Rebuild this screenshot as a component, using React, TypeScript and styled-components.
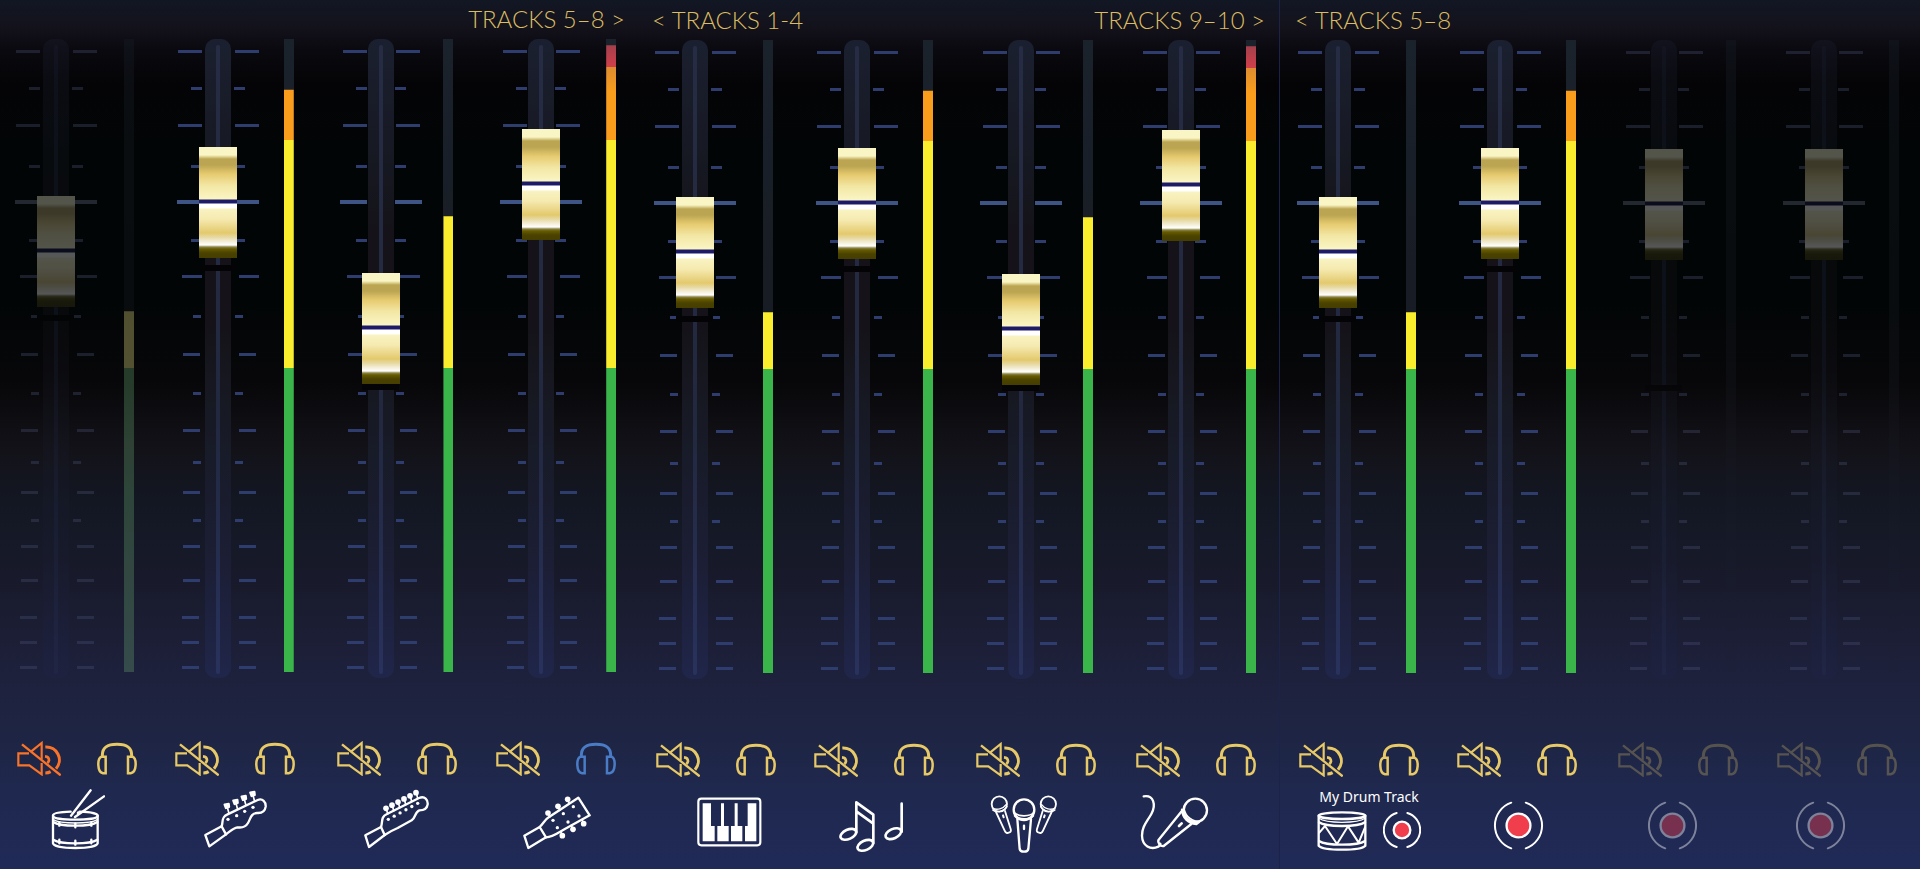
import React, { useState } from "react";
import styled, { createGlobalStyle, css } from "styled-components";

const GOLD = "#e8c967";
const ORANGE = "#fa7328";
const BLUE = "#4a7cc6";

const GlobalStyle = createGlobalStyle`
  *, *::before, *::after { box-sizing: border-box; }
  body {
    margin: 0;
    background: #202a56;
    font-family: Lato, "Liberation Sans", sans-serif;
  }
  button { border: 0; padding: 0; background: none; cursor: pointer; }
`;

const Mixer = styled.main`
  display: grid;
  grid-template-columns: 639fr 640fr 641fr;
  min-height: 100vh;
  background: linear-gradient(
    to bottom,
    #121724 0px,
    #13121b 28px,
    #0a090f 50px,
    #040406 85px,
    #020505 150px,
    #020505 300px,
    #070709 380px,
    #131219 450px,
    #131722 500px,
    #181a2b 580px,
    #1d1f38 650px,
    #1e223e 690px,
    #1e2544 740px,
    #1f284e 790px,
    #202a57 869px
  );
`;

const Bank = styled.section<{ $tone: "first" | "middle" | "last" }>`
  display: flex;
  flex-direction: column;
  min-width: 0;
  padding-top: ${(p) => (p.$tone === "first" ? 0 : 1)}px;
  ${(p) =>
    p.$tone === "last" &&
    css`
      border-left: 1px solid #1b2348;
      padding-left: 2px;
    `}
`;

const BankHeader = styled.header`
  display: flex;
  justify-content: space-between;
  height: 39px;
  padding: 5px 14px 0 13px;
`;

const BankLink = styled.a`
  color: #dcbc62;
  font-size: 24px;
  font-weight: 300;
  line-height: 28px;
  text-decoration: none;
  white-space: nowrap;
`;

const Row = styled.div<{ $columns: string }>`
  display: grid;
  grid-template-columns: ${(p) => p.$columns};
`;

const ControlRow = styled(Row)`
  margin-top: 63px;
  height: 35px;
`;

const InstrumentRow = styled(Row)<{ $lead: number }>`
  height: 67px;
  margin: 11px 0 13px;
  padding-left: ${(p) => p.$lead}px;
`;

const Strip = styled.div<{ $disabled?: boolean }>`
  display: flex;
  min-width: 0;
  padding-left: 15px;
  opacity: ${(p) => (p.$disabled ? 0.33 : 1)};
`;

const Scale = styled.div`
  position: relative;
  display: flex;
  justify-content: center;
  flex: none;
  width: 82px;
  height: 639px;
`;

const Graduations = styled.svg`
  position: absolute;
  inset: 0;
  overflow: visible;
`;

const Track = styled.div`
  position: relative;
  display: flex;
  justify-content: center;
  width: 26px;
  padding: 6px 0 4px;
  border-radius: 10px;
  background: linear-gradient(
    to bottom,
    #1b2030 0%,
    #161821 20%,
    #151319 30%,
    #151319 45%,
    #171a25 60%,
    #1c1e35 82%,
    #20264a 100%
  );
`;

const Rail = styled.div`
  width: 4px;
  border-radius: 2px;
  background: linear-gradient(to bottom, #262c44, #222840 60%, #28325c);
`;

const Shade = styled.span`
  position: absolute;
  left: 22px;
  width: 37px;
  height: 6px;
  background: #040305;
`;

const thumb = css`
  appearance: none;
  width: 38px;
  height: 111px;
  border: 0;
  border-radius: 0;
  background: linear-gradient(
    to bottom,
    #faf5c4 0px,
    #faf5c4 8px,
    #bba552 12px,
    #bba552 18px,
    #e6ca6f 27px,
    #f2e6a2 38px,
    #faf5c4 52px,
    #1d1a68 53px,
    #1d1a68 56px,
    #ffffff 57px,
    #ffffff 61px,
    #f9f3c2 62px,
    #f5eab0 72px,
    #e3c96d 86px,
    #e9dcae 91px,
    #ffffff 98px,
    #8a8244 100px,
    #665b00 102px,
    #4a4200 106px,
    #463e00 111px
  );
`;

const Fader = styled.input<{ $dim?: boolean }>`
  position: absolute;
  top: 0;
  left: 22px;
  width: 38px;
  height: 100%;
  margin: 0;
  appearance: none;
  writing-mode: vertical-lr;
  direction: rtl;
  background: transparent;
  cursor: ns-resize;
  filter: ${(p) => (p.$dim ? "saturate(0.6)" : "none")};

  &::-webkit-slider-runnable-track {
    width: 38px;
    height: 100%;
    background: transparent;
  }
  &::-webkit-slider-thumb {
    ${thumb}
  }
  &::-moz-range-thumb {
    ${thumb}
  }
`;

const Meter = styled.div<{ $gap: number }>`
  flex: none;
  width: 10px;
  height: 633px;
  margin-left: ${(p) => p.$gap}px;
  background: linear-gradient(to bottom, #1a222c, #171920 60%, #1c2136);
`;

const MeterFill = styled.div<{ $dim?: boolean }>`
  width: 100%;
  height: 100%;
  filter: ${(p) => (p.$dim ? "saturate(0.5)" : "none")};
  background: linear-gradient(
    to top,
    #3ab54a 0 304px,
    #f9ed2d 304px 532px,
    #fa9d1c 532px 580px,
    #dd8d30 605px,
    #d03f4b 605px,
    #a4404b 626px
  );
`;

const Controls = styled.div<{ $disabled?: boolean }>`
  display: flex;
  align-items: flex-start;
  gap: 36px;
  padding-left: 17px;
  opacity: ${(p) => (p.$disabled ? 0.28 : 1)};
`;

const IconButton = styled.button<{ $color: string }>`
  display: block;
  height: 35px;
  color: ${(p) => p.$color};

  svg { display: block; }
`;

const Line = styled.svg<{ $sharp?: boolean }>`
  display: block;
  fill: none;
  stroke: currentColor;
  stroke-linejoin: ${(p) => (p.$sharp ? "miter" : "round")};
  stroke-linecap: ${(p) => (p.$sharp ? "butt" : "round")};
`;

const Instrument = styled.div<{ $disabled?: boolean }>`
  display: flex;
  flex-direction: column;
  align-items: flex-start;
  color: #fff;
  opacity: ${(p) => (p.$disabled ? 0.42 : 1)};
`;

const CustomTrack = styled.div`
  display: flex;
  flex-direction: column;
  align-items: center;
`;

const TrackName = styled.span`
  font-size: 14px;
  line-height: 18px;
  font-weight: 400;
  font-family: "Noto Sans", Lato, sans-serif;
  white-space: nowrap;
`;

const TrackIcons = styled.div`
  display: flex;
  align-items: flex-start;
  gap: 16px;
  padding-top: 5px;
`;

const RecordButton = styled.button<{ $top: number }>`
  display: block;
  margin-top: ${(p) => p.$top}px;
  color: #fff;
`;

type TickKind = "long" | "short" | "unity" | "wide" | "mid" | "tiny" | "low";

/* distance from the centre of the fader: [left outer, left inner, right inner, right outer] */
const TICK_SPAN: Record<TickKind, [number, number, number, number]> = {
  long: [40, 16, 17, 41],
  short: [27, 16, 16, 27],
  unity: [41, 14, 14, 41],
  wide: [36, 16, 21, 41],
  mid: [35, 18, 21, 38],
  tiny: [25, 17, 17, 25],
  low: [36, 19, 21, 38],
};

const TICKS: [number, TickKind][] = [
  [11, "long"], [48, "short"], [85, "long"], [126, "short"], [161, "unity"],
  [200, "short"], [236, "wide"], [276, "tiny"], [314, "mid"], [353, "tiny"],
  [390, "mid"], [422, "tiny"], [452, "mid"], [480, "tiny"], [506, "mid"],
  [540, "mid"], [577, "low"], [602, "low"], [627, "low"],
];

function Ticks({ tuck, dim }: { tuck: number; dim?: boolean }) {
  return (
    <Graduations width="82" height="639" viewBox="-41 0 82 639" aria-hidden="true" fill={dim ? "#4b5478" : "#2f3c6e"}>
      {TICKS.map(([y, kind]) => {
        const [lo, li, ri, ro] = TICK_SPAN[kind];
        const t = kind === "unity" ? 0 : tuck;
        const h = kind === "unity" ? 4 : 3;
        const fill = kind !== "unity" ? undefined : dim ? "#666c84" : "#3d5484";
        return (
          <g key={y} fill={fill}>
            <rect x={-lo + t} y={y} width={lo - li} height={h} />
            <rect x={ri - t} y={y} width={ro - ri} height={h} />
          </g>
        );
      })}
    </Graduations>
  );
}

function MuteIcon() {
  return (
    <Line $sharp width="44" height="35" viewBox="51 61 132 105" strokeWidth="6.5">
      <path d="M87 98H55V134H88L125 161V127" />
      <path d="M93 93L125 67V116" />
      <path d="M66 71L182 164" strokeWidth="7" />
      <path d="M136 79A39 39 0 0 1 168 144" strokeWidth="9" />
      <path d="M136 157Q145 157 152 153" strokeWidth="9" />
      <path d="M135 107Q147 108 147 119Q146 124 142 127" strokeWidth="8" />
    </Line>
  );
}

function HeadphonesIcon() {
  return (
    <Line $sharp width="40" height="35" viewBox="291 61 120 105" strokeWidth="7.5">
      <path d="M307 108V104C307 79 322 71 351 71C380 71 395 79 395 104V108" strokeWidth="9" />
      <path d="M317 108V158H309C291 154 291 113 305 108Z" />
      <path d="M384 108V158H392C411 154 411 113 397 108Z" />
    </Line>
  );
}

function SnareIcon() {
  return (
    <Line width="54" height="67" viewBox="154 213 162 201" strokeWidth="7">
      <path d="M214 299L273 223M226 303L313 241" />
      <path d="M240 287C275 288 294 293 294 299C294 307 262 311 227 311C190 311 160 307 160 299C160 292 180 288 213 287" />
      <path d="M160 299V382C162 391 190 396 227 396C264 396 292 391 294 382V299" />
      <path d="M161 311C175 320 200 321 227 321S279 320 293 311" strokeWidth="4" />
      <path d="M161 318C175 328 200 329 227 329S279 328 293 318" />
      <path d="M161 371C175 380 200 382 227 382S279 380 293 371" />
      <path d="M179 319V329M227 322V334M275 319V329M179 371V382M227 374V386M275 371V382" />
      <circle cx="236" cy="291" r="5" fill="currentColor" stroke="none" />
    </Line>
  );
}

function BassIcon() {
  return (
    <Line width="63" height="67" viewBox="611 213 189 201" strokeWidth="7">
      <path d="M664 331L615 357L627 391L677 355" />
      <path d="M664 331L677 355" />
      <path d="M664 331C669 318 662 304 680 296L772 252C787 246 797 258 796 272C794 287 784 292 770 291C752 292 751 307 743 321C736 333 724 336 711 334C698 336 690 346 677 355" />
      {[[679, 270], [705, 258], [730, 246], [756, 234]].map(([x, y]) => (
        <g key={x}>
          <path d={`M${x - 6} ${y - 4}L${x + 6} ${y - 6}L${x + 7} ${y + 3}L${x - 2} ${y + 6}Z`} fill="currentColor" />
          <path d={`M${x + 1} ${y}L${x + 6} ${y + 19}`} strokeWidth="5" />
        </g>
      ))}
      {[[683, 310], [709, 299], [733, 286], [758, 274]].map(([x, y]) => (
        <circle key={x} cx={x} cy={y} r="5" fill="currentColor" stroke="none" />
      ))}
    </Line>
  );
}

function GuitarIcon() {
  return (
    <Line width="65" height="67" viewBox="135 213 195 201" strokeWidth="7">
      <path d="M186 333L139 358L150 393L197 357" />
      <path d="M186 333L197 357" />
      <path d="M186 333C192 318 184 303 204 294L300 246C318 239 327 251 326 265C324 279 313 283 301 283C287 288 291 304 278 313L236 336C222 342 210 348 197 357" />
      {[0, 1, 2, 3, 4, 5].map((i) => (
        <g key={i} fill="currentColor">
          <circle cx={201 + i * 18} cy={277 - i * 9.4} r="8.5" stroke="none" />
          <path d={`M${202 + i * 18} ${277 - i * 9.4}l4 17`} strokeWidth="5" />
          <circle cx={208 + i * 17.6} cy={310 - i * 9.6} r="5" stroke="none" />
        </g>
      ))}
    </Line>
  );
}

function AcousticIcon() {
  return (
    <Line width="68" height="67" viewBox="613 213 204 201" strokeWidth="7">
      <path d="M663 333L617 359L629 396L682 364Z" />
      <path d="M663 333C674 323 679 310 690 304L779 245L813 298L740 338C718 350 703 363 682 364" />
      {[[688, 291], [718, 271], [747, 250], [731, 359], [763, 340], [795, 323]].map(([x, y], i) => (
        <g key={x} fill="currentColor">
          <circle cx={x} cy={y} r="8.5" stroke="none" />
          <path d={i < 3 ? `M${x} ${y}l5 12` : `M${x} ${y}l-5 -12`} strokeWidth="5" />
        </g>
      ))}
      {[[703, 313], [734, 293], [764, 272], [716, 335], [748, 318], [781, 300]].map(([x, y]) => (
        <circle key={x} cx={x} cy={y} r="5" fill="currentColor" stroke="none" />
      ))}
    </Line>
  );
}

function PianoIcon() {
  return (
    <Line width="65" height="67" viewBox="172 211 195 201" strokeWidth="6.5">
      <rect x="176" y="243" width="186" height="140" rx="9" />
      <g fill="currentColor" stroke="none">
        <path d="M189 257H214V325H225V371H189Z" />
        <path d="M244 257H253V325H267V371H233V325H244Z" />
        <path d="M285 257H294V325H308V371H274V325H285Z" />
        <path d="M324 257H350V371H316V325H324Z" />
      </g>
    </Line>
  );
}

function NotesIcon() {
  return (
    <Line width="65" height="67" viewBox="598 211 195 201" strokeWidth="8">
      <ellipse cx="626" cy="350" rx="25" ry="14" transform="rotate(-24 626 350)" />
      <ellipse cx="677" cy="383" rx="25" ry="14" transform="rotate(-24 677 383)" />
      <ellipse cx="761" cy="348" rx="25" ry="14" transform="rotate(-24 761 348)" />
      <path d="M650 344V254L701 291V376M650 281L701 318M786 342V258" />
    </Line>
  );
}

function SmallMic({ x, flip }: { x: number; flip?: boolean }) {
  return (
    <g transform={`translate(${x} 259)${flip ? " scale(-1 1)" : ""}`} strokeWidth="5.5">
      <circle r="23" />
      <path d="M-21 12C-8 20 12 14 21 1M-20 18C-8 28 15 22 23 8" strokeWidth="4" />
      <path d="M-10 24L16 80C19 87 24 88 28 86C34 85 36 81 34 75L17 21" />
      <path d="M11 34L13 40" strokeWidth="6" />
    </g>
  );
}

function MicsIcon() {
  return (
    <Line width="68" height="67" viewBox="91 211 204 201" strokeWidth="7">
      <SmallMic x={119} />
      <SmallMic x={266} flip />
      <circle cx="193" cy="276" r="31" />
      <path d="M163 284C174 298 212 298 223 284" strokeWidth="5" />
      <path d="M166 294C178 308 208 308 220 294" />
      <path d="M173 304L180 394C181 400 184 402 193 402S205 400 206 394L214 304" />
      <path d="M193 324V334" strokeWidth="7" />
    </Line>
  );
}

function MicIcon() {
  return (
    <Line width="69" height="67" viewBox="542 211 207 201" strokeWidth="7">
      <path d="M553 236C583 231 591 261 576 289C562 314 548 326 548 354C549 385 574 398 597 387C603 384 600 380 603 378" />
      <path d="M667 281L598 366C594 373 602 387 613 385L696 319" />
      <circle cx="708" cy="278" r="35" />
      <path d="M674 266C673 290 691 309 718 312" strokeWidth="5" />
      <path d="M668 276C670 301 686 317 711 319L719 313" />
      <path d="M659 325L667 317" strokeWidth="8" />
    </Line>
  );
}

function DrumIcon() {
  return (
    <Line width="50" height="40" viewBox="111 276 150 120" strokeWidth="7">
      <ellipse cx="186" cy="290" rx="70" ry="10" />
      <path d="M116 290V380C124 389 152 392 186 392S248 389 256 380V290" />
      <path d="M117 298C130 308 158 310 186 310S242 308 255 298" strokeWidth="4" />
      <path d="M117 310C130 319 158 321 186 321S242 319 255 310M117 366C130 375 158 377 186 377S242 375 255 366" />
      <path d="M118 341L135 321L171 375L204 322L236 371L255 325" strokeWidth="6" />
    </Line>
  );
}

function RecordIcon({ small }: { small?: boolean }) {
  return small ? (
    <Line width="38" height="38" viewBox="-57 -57 114 114" strokeWidth="6">
      <circle r="25" fill="#f03e4d" strokeWidth="7" />
      <path d="M-16 -51A53 53 0 0 0 -16 51M16 -51A53 53 0 0 1 16 51" />
    </Line>
  ) : (
    <Line width="51" height="51" viewBox="-77 -77 154 154" strokeWidth="6">
      <circle r="36" fill="#f03e4d" strokeWidth="7" />
      <path d="M-22 -69A73 73 0 0 0 -22 69M22 -69A73 73 0 0 1 22 69" />
    </Line>
  );
}

interface Channel {
  name: string;
  position: number;
  level: number;
  shade?: number;
  off?: boolean;
  stripOff?: boolean;
  muted?: boolean;
  solo?: boolean;
  art: React.ReactNode;
}

interface BankData {
  tone: "first" | "middle" | "last";
  prev?: string;
  next?: string;
  faderColumns: string;
  instrumentLead: number;
  instrumentColumns: string;
  channels: Channel[];
}

const record = (
  <RecordButton $top={12} type="button" aria-label="Record">
    <RecordIcon />
  </RecordButton>
);

const BANKS: BankData[] = [
  {
    tone: "first",
    next: "TRACKS 5–8 >",
    faderColumns: "162fr 164fr 160fr 154fr",
    instrumentLead: 51,
    instrumentColumns: "153fr 161fr 159fr 116fr",
    channels: [
      { name: "Drums", position: 703, level: 57, shade: 276, stripOff: true, muted: true, art: <SnareIcon /> },
      { name: "Bass", position: 795, level: 92, shade: 226, art: <BassIcon /> },
      { name: "Guitar", position: 557, level: 72, shade: 345, art: <GuitarIcon /> },
      { name: "Acoustic", position: 830, level: 99, solo: true, art: <AcousticIcon /> },
    ],
  },
  {
    tone: "middle",
    prev: "< TRACKS 1-4",
    next: "TRACKS 9–10 >",
    faderColumns: "162fr 164fr 160fr 154fr",
    instrumentLead: 58,
    instrumentColumns: "142fr 151fr 150fr 139fr",
    channels: [
      { name: "Keys", position: 703, level: 57, shade: 276, art: <PianoIcon /> },
      { name: "Melody", position: 795, level: 92, shade: 226, art: <NotesIcon /> },
      { name: "Backing vocals", position: 557, level: 72, shade: 345, art: <MicsIcon /> },
      { name: "Vocals", position: 830, level: 99, art: <MicIcon /> },
    ],
  },
  {
    tone: "last",
    prev: "< TRACKS 5–8",
    faderColumns: "162fr 164fr 160fr 152fr",
    instrumentLead: 35,
    instrumentColumns: "176fr 154fr 148fr 125fr",
    channels: [
      {
        name: "My Drum Track",
        position: 703,
        level: 57,
        shade: 276,
        art: (
          <CustomTrack>
            <TrackName>My Drum Track</TrackName>
            <TrackIcons>
              <DrumIcon />
              <RecordButton $top={0} type="button" aria-label="Record">
                <RecordIcon small />
              </RecordButton>
            </TrackIcons>
          </CustomTrack>
        ),
      },
      { name: "Track 10", position: 795, level: 92, shade: 226, art: record },
      { name: "Empty 1", position: 793, level: 0, shade: 345, off: true, art: record },
      { name: "Empty 2", position: 793, level: 0, off: true, art: record },
    ],
  },
];

const METER_GAPS = [27, 25, 21, 24];
const CONTROL_COLUMNS = "158fr 162fr 160fr 160fr";

function ChannelStrip({ channel, index }: { channel: Channel; index: number }) {
  const [position, setPosition] = useState(channel.position);
  const dim = channel.off || channel.stripOff;
  return (
    <Strip $disabled={dim}>
      <Scale>
        <Ticks tuck={index < 2 ? 0 : 2} dim={dim} />
        <Track>
          <Rail />
        </Track>
        {channel.shade !== undefined && <Shade style={{ top: channel.shade }} />}
        <Fader
          $dim={dim}
          type="range"
          min={0}
          max={1000}
          value={position}
          aria-label={`${channel.name} volume`}
          onChange={(e) => setPosition(Number(e.target.value))}
        />
      </Scale>
      <Meter $gap={METER_GAPS[index]} role="meter" aria-label={`${channel.name} level`} aria-valuenow={channel.level}>
        <MeterFill $dim={dim} style={{ clipPath: `inset(${100 - channel.level}% 0 0 0)` }} />
      </Meter>
    </Strip>
  );
}

function ChannelControls({ channel }: { channel: Channel }) {
  const [muted, setMuted] = useState(!!channel.muted);
  const [solo, setSolo] = useState(!!channel.solo);
  return (
    <Controls $disabled={channel.off}>
      <IconButton
        type="button"
        $color={muted ? ORANGE : GOLD}
        aria-pressed={muted}
        aria-label={`Mute ${channel.name}`}
        onClick={() => setMuted(!muted)}
      >
        <MuteIcon />
      </IconButton>
      <IconButton
        type="button"
        $color={solo ? BLUE : GOLD}
        aria-pressed={solo}
        aria-label={`Solo ${channel.name}`}
        onClick={() => setSolo(!solo)}
      >
        <HeadphonesIcon />
      </IconButton>
    </Controls>
  );
}

export default function App() {
  return (
    <>
      <GlobalStyle />
      <Mixer>
        {BANKS.map((bank) => (
          <Bank key={bank.tone} $tone={bank.tone}>
            <BankHeader>
              {bank.prev ? <BankLink href="#prev">{bank.prev}</BankLink> : <span />}
              {bank.next && <BankLink href="#next">{bank.next}</BankLink>}
            </BankHeader>
            <Row $columns={bank.faderColumns}>
              {bank.channels.map((c, i) => (
                <ChannelStrip key={c.name} channel={c} index={i} />
              ))}
            </Row>
            <ControlRow $columns={CONTROL_COLUMNS}>
              {bank.channels.map((c) => (
                <ChannelControls key={c.name} channel={c} />
              ))}
            </ControlRow>
            <InstrumentRow $columns={bank.instrumentColumns} $lead={bank.instrumentLead}>
              {bank.channels.map((c) => (
                <Instrument key={c.name} $disabled={c.off}>
                  {c.art}
                </Instrument>
              ))}
            </InstrumentRow>
          </Bank>
        ))}
      </Mixer>
    </>
  );
}
